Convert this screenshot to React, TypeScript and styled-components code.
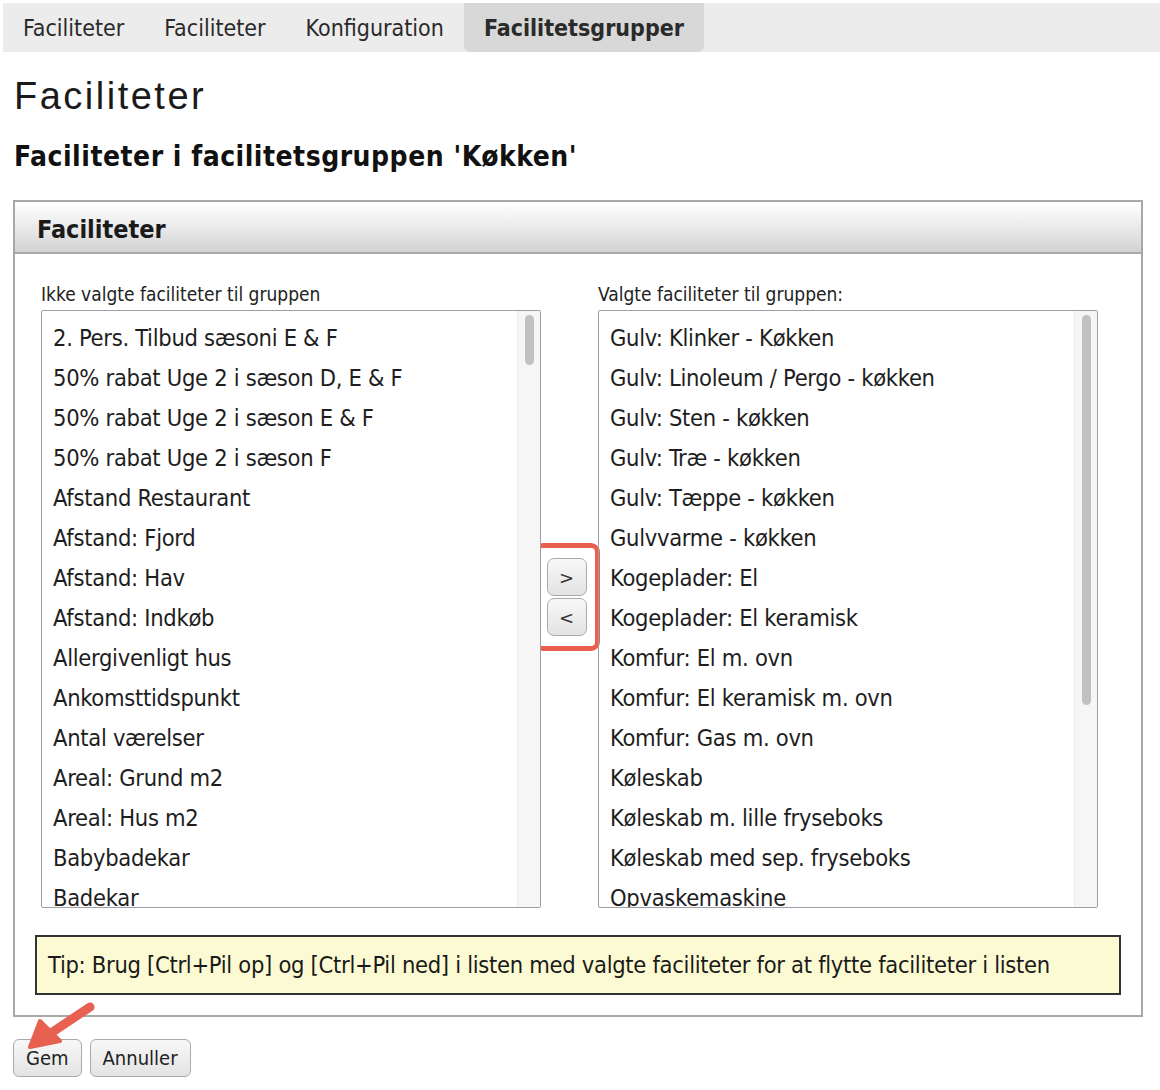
import styled, { createGlobalStyle } from "styled-components";

const Global = createGlobalStyle`
  body { margin: 0; background: #fff; font-family: "DejaVu Sans Condensed", "DejaVu Sans", sans-serif; color: #1a1a1a; }
`;

const left = [
  "2. Pers. Tilbud sæsoni E & F",
  "50% rabat Uge 2 i sæson D, E & F",
  "50% rabat Uge 2 i sæson E & F",
  "50% rabat Uge 2 i sæson F",
  "Afstand Restaurant",
  "Afstand: Fjord",
  "Afstand: Hav",
  "Afstand: Indkøb",
  "Allergivenligt hus",
  "Ankomsttidspunkt",
  "Antal værelser",
  "Areal: Grund m2",
  "Areal: Hus m2",
  "Babybadekar",
  "Badekar",
];
const right = [
  "Gulv: Klinker - Køkken",
  "Gulv: Linoleum / Pergo - køkken",
  "Gulv: Sten - køkken",
  "Gulv: Træ - køkken",
  "Gulv: Tæppe - køkken",
  "Gulvvarme - køkken",
  "Kogeplader: El",
  "Kogeplader: El keramisk",
  "Komfur: El m. ovn",
  "Komfur: El keramisk m. ovn",
  "Komfur: Gas m. ovn",
  "Køleskab",
  "Køleskab m. lille fryseboks",
  "Køleskab med sep. fryseboks",
  "Opvaskemaskine",
];

export default function App() {
  return (
    <Page>
      <Global />
      <Tabs>
        <Tab>Faciliteter</Tab>
        <Tab>Faciliteter</Tab>
        <Tab>Konfiguration</Tab>
        <Tab $active>Facilitetsgrupper</Tab>
      </Tabs>
      <Title>Faciliteter</Title>
      <Subtitle>Faciliteter i facilitetsgruppen 'Køkken'</Subtitle>
      <Panel>
        <PanelHead>Faciliteter</PanelHead>
        <PanelBody>
          <Columns>
            <Column>
              <Label>Ikke valgte faciliteter til gruppen</Label>
              <List>
                {left.map((t) => <Item key={t}>{t}</Item>)}
                <Track><Thumb $h={50} /></Track>
              </List>
            </Column>
            <Mover>
              <Highlight>
                <SmallBtn>&gt;</SmallBtn>
                <SmallBtn>&lt;</SmallBtn>
              </Highlight>
            </Mover>
            <Column>
              <Label>Valgte faciliteter til gruppen:</Label>
              <List>
                {right.map((t) => <Item key={t}>{t}</Item>)}
                <Track><Thumb $h={390} /></Track>
              </List>
            </Column>
          </Columns>
          <Tip>Tip: Brug [Ctrl+Pil op] og [Ctrl+Pil ned] i listen med valgte faciliteter for at flytte faciliteter i listen</Tip>
        </PanelBody>
      </Panel>
      <Actions>
        <Button>Gem</Button>
        <Button>Annuller</Button>
        <Arrow width="80" height="60" viewBox="0 0 80 60">
          <path d="M72 10 L30 38" stroke="#e8604f" strokeWidth="9" strokeLinecap="round" />
          <path d="M12 50 L22 24 L42 44 Z" fill="#e8604f" stroke="#e8604f" strokeWidth="4" strokeLinejoin="round" />
        </Arrow>
      </Actions>
    </Page>
  );
}

const Page = styled.div`
  padding: 3px 0 0 0;
  width: 1160px;
  height: 1090px;
  box-sizing: border-box;
`;

const Tabs = styled.div`
  display: flex;
  margin-left: 3px;
  height: 49px;
  background: #ebeceb;
  padding-left: 0;
`;

const Tab = styled.div<{ $active?: boolean }>`
  padding: 0 ${(p) => (p.$active ? "20px" : "20px")};
  margin-right: 0;
  display: flex;
  align-items: center;
  font-size: 23px;
  font-weight: ${(p) => (p.$active ? "bold" : "normal")};
  background: ${(p) => (p.$active ? "#d7d8d7" : "transparent")};
  border-radius: 0 0 6px 6px;
  color: #2a2a2a;
`;

const Title = styled.h1`
  margin: 24px 0 0 14px;
  font-family: "Liberation Sans", Arial, sans-serif;
  font-weight: normal;
  font-size: 38px;
  letter-spacing: 2.5px;
  line-height: 40px;
`;

const Subtitle = styled.h2`
  margin: 26px 0 0 14px;
  font-size: 28px;
  letter-spacing: 0.5px;
  line-height: 30px;
  font-weight: bold;
  color: #111;
`;

const Panel = styled.div`
  margin: 28px 0 0 13px;
  width: 1130px;
  border: 2px solid #a8a8a8;
  box-sizing: border-box;
`;

const PanelHead = styled.div`
  height: 52px;
  display: flex;
  align-items: center;
  padding: 4px 0 0 22px;
  box-sizing: border-box;
  font-size: 25px;
  font-weight: bold;
  background: linear-gradient(#ffffff, #e6e6e6 60%, #d2d2d2);
  border-bottom: 2px solid #a8a8a8;
`;

const PanelBody = styled.div`
  padding: 28px 20px 20px 20px;
`;

const Columns = styled.div`
  display: flex;
  align-items: flex-start;
`;

const Column = styled.div`
  display: flex;
  flex-direction: column;
  margin-left: 6px;
`;

const Label = styled.div`
  font-size: 19px;
  line-height: 24px;
  margin-bottom: 4px;
  margin-left: 0;
  color: #222;
`;

const List = styled.div`
  position: relative;
  width: 500px;
  height: 598px;
  overflow: hidden;
  border: 1.5px solid #9e9ea6;
  border-radius: 2px;
  box-sizing: border-box;
  padding: 7px 0 0 11px;
`;

const Item = styled.div`
  height: 40px;
  line-height: 40px;
  font-size: 23.5px;
  letter-spacing: -0.3px;
  color: #1e1e1e;
  white-space: nowrap;
`;

const Track = styled.div`
  position: absolute;
  top: 0;
  right: 0;
  bottom: 0;
  width: 22px;
  background: #f6f6f6;
  border-left: 1px solid #ececec;
`;

const Thumb = styled.div<{ $h: number }>`
  margin: 4px auto 0;
  width: 9px;
  height: ${(p) => p.$h}px;
  background: #c1c1c1;
  border-radius: 5px;
`;

const Mover = styled.div`
  width: 51px;
  padding-top: 261px;
  display: flex;
  justify-content: center;
  margin-left: 0;
`;

const Highlight = styled.div`
  border: 5px solid #ea5e4e;
  border-radius: 9px;
  padding: 10px 8px;
  display: flex;
  flex-direction: column;
  gap: 2px;
`;

const SmallBtn = styled.button`
  width: 40px;
  height: 38px;
  border: 1.5px solid #a9a9b0;
  border-radius: 7px;
  background: linear-gradient(#f8f8f8, #e3e3e3);
  font-family: "DejaVu Sans", sans-serif;
  font-size: 18px;
  color: #333;
  padding: 0;
`;

const Tip = styled.div`
  margin: 27px 0 0 0;
  width: 1086px;
  box-sizing: border-box;
  height: 60px;
  display: flex;
  align-items: center;
  padding-left: 11px;
  background: #fcfad2;
  border: 2px solid #333;
  font-size: 23.5px;
  letter-spacing: -0.3px;
  white-space: nowrap;
  color: #1a1a1a;
`;

const Actions = styled.div`
  position: relative;
  display: flex;
  gap: 8px;
  margin: 22px 0 0 13px;
`;

const Button = styled.button`
  height: 38px;
  padding: 0 12px;
  border: 1.5px solid #a9a9b0;
  border-radius: 6px;
  background: linear-gradient(#f8f8f8, #e3e3e3);
  font-family: "DejaVu Sans Condensed", sans-serif;
  font-size: 20px;
  color: #222;
`;

const Arrow = styled.svg`
  position: absolute;
  left: 5px;
  top: -42px;
`;
